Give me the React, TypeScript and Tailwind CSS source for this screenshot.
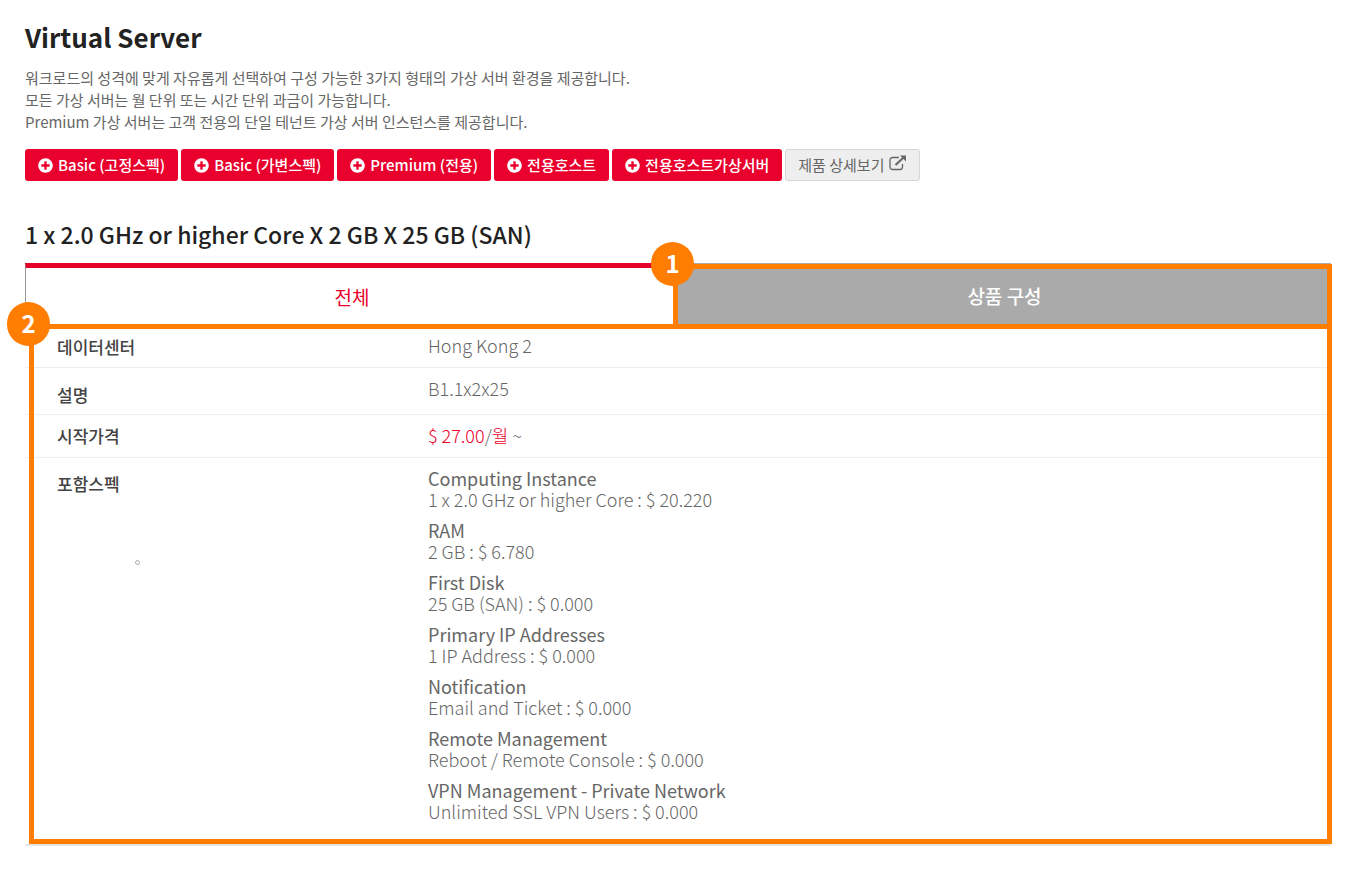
import { useState } from 'react';
import { FaPlusCircle } from 'react-icons/fa';

const orders = ['Basic (고정스펙)', 'Basic (가변스펙)', 'Premium (전용)', '전용호스트', '전용호스트가상서버'];

const specs = [
  { name: 'Computing Instance', value: '1 x 2.0 GHz or higher Core : $ 20.220' },
  { name: 'RAM', value: '2 GB : $ 6.780' },
  { name: 'First Disk', value: '25 GB (SAN) : $ 0.000' },
  { name: 'Primary IP Addresses', value: '1 IP Address : $ 0.000' },
  { name: 'Notification', value: 'Email and Ticket : $ 0.000' },
  { name: 'Remote Management', value: 'Reboot / Remote Console : $ 0.000' },
  { name: 'VPN Management - Private Network', value: 'Unlimited SSL VPN Users : $ 0.000' },
];

function ExternalIcon() {
  return (
    <svg viewBox="0 0 18 16" className="mb-1 h-4 w-[18px]" fill="none" aria-hidden="true">
      <path
        d="M10 2.500H3.500A2.500 2.500 0 0 0 1 5v7a2.500 2.500 0 0 0 2.500 2.500h7.500a2.500 2.500 0 0 0 2.500-2.500V9"
        stroke="currentColor"
        strokeWidth="1.300"
      />
      <path d="M6.500 10 14.500 2.500" stroke="currentColor" strokeWidth="2" />
      <path d="M11 0.500h6v6z" fill="currentColor" />
    </svg>
  );
}

function Marker({ label, className }: { label: string; className: string }) {
  return (
    <span
      className={`absolute z-20 flex h-11 w-[43px] items-center justify-center rounded-full bg-[#ff7d00] pb-0.5 text-2xl font-bold text-white ${className}`}
    >
      {label}
    </span>
  );
}

export default function App() {
  const [tab, setTab] = useState('all');

  return (
    <main className="bg-white pt-[19px] pr-[27px] pb-7 pl-[25px] font-['Noto_Sans_CJK_KR',sans-serif] text-[#666]">
      <h1 className="text-[26px] leading-9 font-bold text-[#222]">Virtual Server</h1>
      <p className="mt-3 text-[15px] leading-[22px]">
        워크로드의 성격에 맞게 자유롭게 선택하여 구성 가능한 3가지 형태의 가상 서버 환경을 제공합니다.
        <br />
        모든 가상 서버는 월 단위 또는 시간 단위 과금이 가능합니다.
        <br />
        Premium 가상 서버는 고객 전용의 단일 테넌트 가상 서버 인스턴스를 제공합니다.
      </p>

      <div className="mt-4 flex flex-wrap gap-[3px]">
        {orders.map((order) => (
          <button
            key={order}
            type="button"
            className="flex h-8 items-center gap-[5px] rounded-[3px] bg-[#ea002c] px-[13px] text-[15px] font-medium whitespace-nowrap text-white"
          >
            <FaPlusCircle size={15} />
            {order}
          </button>
        ))}
        <button
          type="button"
          className="flex h-8 items-center gap-[5px] rounded-[3px] border border-[#d6d6d6] bg-[#eee] px-3 text-[15px] whitespace-nowrap"
        >
          제품 상세보기
          <ExternalIcon />
        </button>
      </div>

      <h2 className="mt-[37px] text-[23px] leading-8 font-medium text-[#222]">
        1 x 2.0 GHz or higher Core X 2 GB X 25 GB (SAN)
      </h2>

      <div role="tablist" className="mt-[13px] grid grid-cols-2">
        <button
          type="button"
          role="tab"
          aria-selected={tab === 'all'}
          onClick={() => setTab('all')}
          className="h-[61px] border-t-[5px] border-l border-t-[#e4002b] border-l-[#999] pt-0.5 text-[19px] text-[#ea002c]"
        >
          전체
        </button>
        <div className="relative">
          <button
            type="button"
            role="tab"
            aria-selected={tab === 'config'}
            onClick={() => setTab('config')}
            className="h-[61px] w-full bg-[#aaa] pt-1.5 text-[19px] font-medium text-white"
          >
            상품 구성
          </button>
          <span className="pointer-events-none absolute top-px -right-px -bottom-[5px] -left-[5px] border-[5px] border-[#ff7d00]" />
          <Marker label="1" className="-top-[21px] -left-[27px]" />
        </div>
      </div>

      <div className="relative">
        <table className="w-full border-collapse border-b-2 border-[#e6e6e6] text-left text-lg leading-[21px] font-light">
          <tbody>
            <tr className="h-[43px] border-b border-[#eee] align-top">
              <th scope="row" className="w-[370px] pt-3 pl-8 text-[17px] leading-[21px] font-medium text-[#444]">
                데이터센터
              </th>
              <td className="pt-[11px] pl-[33px]">Hong Kong 2</td>
            </tr>
            <tr className="h-[47px] border-b border-[#eee] align-top">
              <th scope="row" className="pt-4 pl-8 text-[17px] leading-[21px] font-medium text-[#444]">
                설명
              </th>
              <td className="pt-2.5 pl-[33px]">B1.1x2x25</td>
            </tr>
            <tr className="h-[43px] border-b border-[#eee] align-top">
              <th scope="row" className="pt-2.5 pl-8 text-[17px] leading-[21px] font-medium text-[#444]">
                시작가격
              </th>
              <td className="pt-2.5 pl-[33px]">
                <span className="text-[#ea002c]">$ 27.00</span>/<span className="text-[#ea002c]">월</span> ~
              </td>
            </tr>
            <tr className="align-top">
              <th scope="row" className="pt-[15px] pl-8 text-[17px] leading-[21px] font-medium text-[#444]">
                포함스펙
                <span className="mt-[66px] ml-[78px] block size-[5px] rounded-full border border-[#aaa]" />
              </th>
              <td className="pt-2.5 pb-[22px] pl-[33px]">
                <dl className="flex flex-col gap-[10px]">
                  {specs.map((spec) => (
                    <div key={spec.name}>
                      <dt className="font-normal">{spec.name}</dt>
                      <dd>{spec.value}</dd>
                    </div>
                  ))}
                </dl>
              </td>
            </tr>
          </tbody>
        </table>
        <span className="pointer-events-none absolute top-0 -right-px bottom-0.5 left-1 border-[5px] border-[#ff7d00]" />
        <Marker label="2" className="-top-[22px] -left-[18px]" />
      </div>
    </main>
  );
}
